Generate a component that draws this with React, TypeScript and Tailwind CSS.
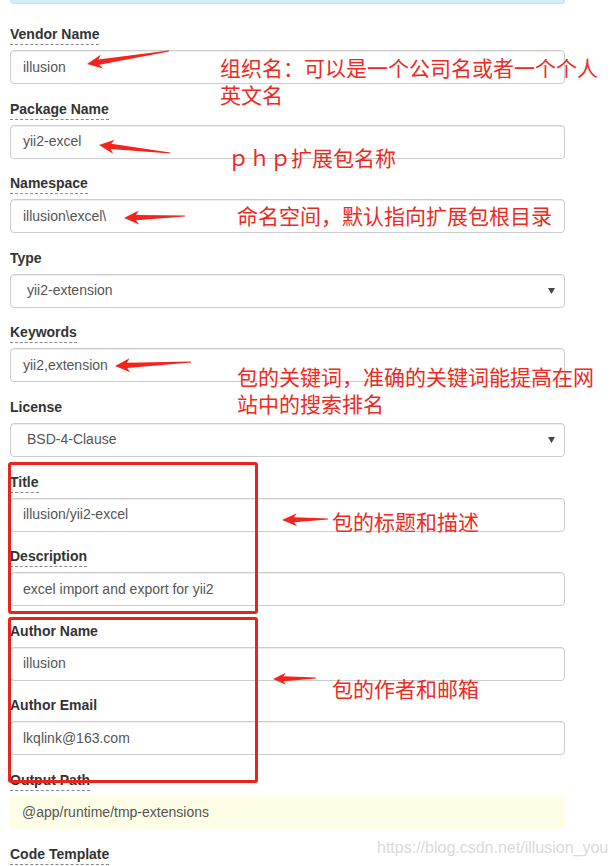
import React from 'react';

type Field = {
  label: string;
  value: string;
  kind: 'input' | 'select' | 'sticky';
  hint?: boolean;
};

const fields: Field[] = [
  { label: 'Vendor Name', value: 'illusion', kind: 'input', hint: true },
  { label: 'Package Name', value: 'yii2-excel', kind: 'input', hint: true },
  { label: 'Namespace', value: 'illusion\\excel\\', kind: 'input', hint: true },
  { label: 'Type', value: 'yii2-extension', kind: 'select' },
  { label: 'Keywords', value: 'yii2,extension', kind: 'input', hint: true },
  { label: 'License', value: 'BSD-4-Clause', kind: 'select' },
  { label: 'Title', value: 'illusion/yii2-excel', kind: 'input', hint: true },
  { label: 'Description', value: 'excel import and export for yii2', kind: 'input', hint: true },
  { label: 'Author Name', value: 'illusion', kind: 'input' },
  { label: 'Author Email', value: 'lkqlink@163.com', kind: 'input' },
  { label: 'Output Path', value: '@app/runtime/tmp-extensions', kind: 'sticky', hint: true },
];

type Pt = [number, number];

// arrow as a single polygon: thin tail widening to a filled head at the tip
const arrowPoints = (tip: Pt, tail: Pt, head = 15, half = 7, neck = 2.6) => {
  const dx = tail[0] - tip[0];
  const dy = tail[1] - tip[1];
  const len = Math.hypot(dx, dy);
  const ux = dx / len;
  const uy = dy / len;
  const nx = -uy;
  const ny = ux;
  const at = (d: number, w: number): Pt => [tip[0] + ux * d + nx * w, tip[1] + uy * d + ny * w];
  const pts: Pt[] = [
    tip,
    at(head, half),
    at(head * 0.8, neck),
    at(len, 0.6),
    at(len, -0.6),
    at(head * 0.8, -neck),
    at(head, -half),
  ];
  return pts.map((p) => p.join(',')).join(' ');
};

const arrows: { tip: Pt; tail: Pt; head?: number; half?: number }[] = [
  { tip: [87, 64], tail: [169, 51] },
  { tip: [99, 145], tail: [170, 153] },
  { tip: [124, 218], tail: [185, 216] },
  { tip: [115, 366], tail: [191, 362] },
  { tip: [282, 520], tail: [328, 519], head: 15, half: 6.5 },
  { tip: [273, 679], tail: [316, 678], head: 13, half: 6 },
];

const notes: { x: number; y: number; lines: string[] }[] = [
  { x: 220, y: 54, lines: ['组织名：可以是一个公司名或者一个个人', '英文名'] },
  { x: 228, y: 144, lines: ['ｐｈｐ扩展包名称'] },
  { x: 237, y: 202, lines: ['命名空间，默认指向扩展包根目录'] },
  { x: 237, y: 363, lines: ['包的关键词，准确的关键词能提高在网', '站中的搜索排名'] },
  { x: 332, y: 508, lines: ['包的标题和描述'] },
  { x: 332, y: 675, lines: ['包的作者和邮箱'] },
];

const Label: React.FC<{ text: string; hint?: boolean }> = ({ text, hint }) => (
  <label
    className={`block w-fit text-[14px] leading-[20px] font-bold text-[#333] border-b border-dashed ${
      hint ? 'border-[#888]' : 'border-transparent'
    }`}
  >
    {text}
  </label>
);

const FormField: React.FC<{ field: Field }> = ({ field }) => (
  <div className="flex flex-col gap-[5px]">
    <Label text={field.label} hint={field.hint} />
    {field.kind === 'sticky' ? (
      <div className="h-[33px] flex items-center px-[12px] bg-[#fefee6] text-[14px] text-[#555]">
        {field.value}
      </div>
    ) : (
      <div className="h-[34px] flex items-center justify-between rounded-[4px] border border-[#ccc] bg-white shadow-[inset_0_1px_1px_rgba(0,0,0,0.075)] text-[14px] text-[#555]">
        <span className={field.kind === 'select' ? 'pl-[16px]' : 'pl-[12px]'}>{field.value}</span>
        {field.kind === 'select' && (
          <svg width="7" height="6" viewBox="0 0 7 6" className="mr-[9px]">
            <polygon points="0,0 7,0 3.5,6" fill="#444" />
          </svg>
        )}
      </div>
    )}
  </div>
);

export default function App() {
  return (
    <div
      className="relative w-[615px] h-[866px] overflow-hidden bg-white"
      style={{ fontFamily: '"Liberation Sans", Arial, sans-serif' }}
    >
      <div className="ml-[10px] w-[555px] flex flex-col">
        {/* bottom of the info alert, cut off by the screenshot */}
        <div className="h-[4px] mb-[20px] rounded-b-[4px] border border-t-0 border-[#bfe3ee] bg-[#d6eef7]" />
        <div className="flex flex-col gap-[14.6px]">
          {fields.map((f) => (
            <FormField key={f.label} field={f} />
          ))}
          <Label text="Code Template" hint />
        </div>
      </div>

      {/* annotation layer */}
      <svg className="absolute inset-0 pointer-events-none" width="615" height="866">
        {arrows.map((a, i) => (
          <polygon key={i} points={arrowPoints(a.tip, a.tail, a.head, a.half)} fill="#f4231b" />
        ))}
      </svg>

      <div className="absolute left-[8px] top-[462px] w-[250px] h-[152px] border-[3px] border-[#e8241c] rounded-[3px]" />
      <div className="absolute left-[8px] top-[617px] w-[250px] h-[166px] border-[3px] border-[#e8241c] rounded-[3px]" />

      {notes.map((n, i) => (
        <div
          key={i}
          className="absolute text-[21px] leading-[27px] text-[#ee2a22] whitespace-nowrap"
          style={{ left: n.x, top: n.y, fontFamily: '"Noto Sans CJK SC", "Liberation Sans", sans-serif' }}
        >
          {n.lines.map((l) => (
            <div key={l}>{l}</div>
          ))}
        </div>
      ))}

      <div className="absolute left-[377px] top-[838px] text-[16px] leading-[20px] text-[#dadada] whitespace-nowrap">
        https://blog.csdn.net/illusion_you
      </div>
    </div>
  );
}
